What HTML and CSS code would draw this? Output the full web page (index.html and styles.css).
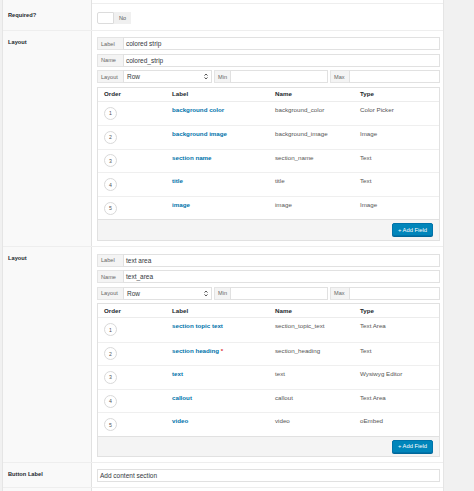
FILE: index.html
```html
<!DOCTYPE html>
<html>
<head>
<meta charset="utf-8">
<link rel="stylesheet" href="styles.css">
</head>
<body>
<div class="panel">
  <div class="row stub"><div class="lab"></div><div class="cnt"></div></div>

  <div class="row">
    <div class="lab">Required?</div>
    <div class="cnt req">
      <div class="toggle"><span class="tg-box"></span><span class="tg-txt">No</span></div>
    </div>
  </div>

  <div class="row">
    <div class="lab">Layout</div>
    <div class="cnt fields">
      <div class="group"><span class="pre pre-w">Label</span><span class="inp">colored strip</span></div>
      <div class="group"><span class="pre pre-w">Name</span><span class="inp">colored_strip</span></div>
      <div class="trio">
        <div class="group"><span class="pre pre-w">Layout</span><span class="inp sel">Row<svg class="arr" width="4" height="7" viewBox="0 0 4 7"><path d="M0.5 2.6 L2 1 L3.5 2.6 M0.5 4.4 L2 6 L3.5 4.4" fill="none" stroke="#444" stroke-width="0.9"/></svg></span></div>
        <div class="group"><span class="pre pre-min">Min</span><span class="inp"></span></div>
        <div class="group"><span class="pre pre-max">Max</span><span class="inp"></span></div>
      </div>
      <div class="tbl">
        <div class="tr th"><span>Order</span><span>Label</span><span>Name</span><span>Type</span></div>
        <div class="tr"><span class="num">1</span><span class="fl">background color</span><span class="fn">background_color</span><span class="fn">Color Picker</span></div>
        <div class="tr"><span class="num">2</span><span class="fl">background image</span><span class="fn">background_image</span><span class="fn">Image</span></div>
        <div class="tr"><span class="num">3</span><span class="fl">section name</span><span class="fn">section_name</span><span class="fn">Text</span></div>
        <div class="tr"><span class="num">4</span><span class="fl">title</span><span class="fn">title</span><span class="fn">Text</span></div>
        <div class="tr"><span class="num">5</span><span class="fl">image</span><span class="fn">image</span><span class="fn">Image</span></div>
        <div class="tfoot"><span class="btn">+ Add Field</span></div>
      </div>
    </div>
  </div>

  <div class="row">
    <div class="lab">Layout</div>
    <div class="cnt fields">
      <div class="group"><span class="pre pre-w">Label</span><span class="inp">text area</span></div>
      <div class="group"><span class="pre pre-w">Name</span><span class="inp">text_area</span></div>
      <div class="trio">
        <div class="group"><span class="pre pre-w">Layout</span><span class="inp sel">Row<svg class="arr" width="4" height="7" viewBox="0 0 4 7"><path d="M0.5 2.6 L2 1 L3.5 2.6 M0.5 4.4 L2 6 L3.5 4.4" fill="none" stroke="#444" stroke-width="0.9"/></svg></span></div>
        <div class="group"><span class="pre pre-min">Min</span><span class="inp"></span></div>
        <div class="group"><span class="pre pre-max">Max</span><span class="inp"></span></div>
      </div>
      <div class="tbl">
        <div class="tr th"><span>Order</span><span>Label</span><span>Name</span><span>Type</span></div>
        <div class="tr"><span class="num">1</span><span class="fl">section topic text</span><span class="fn">section_topic_text</span><span class="fn">Text Area</span></div>
        <div class="tr"><span class="num">2</span><span class="fl">section heading <em class="star">*</em></span><span class="fn">section_heading</span><span class="fn">Text</span></div>
        <div class="tr"><span class="num">3</span><span class="fl">text</span><span class="fn">text</span><span class="fn">Wysiwyg Editor</span></div>
        <div class="tr"><span class="num">4</span><span class="fl">callout</span><span class="fn">callout</span><span class="fn">Text Area</span></div>
        <div class="tr"><span class="num">5</span><span class="fl">video</span><span class="fn">video</span><span class="fn">oEmbed</span></div>
        <div class="tfoot"><span class="btn">+ Add Field</span></div>
      </div>
    </div>
  </div>

  <div class="row last">
    <div class="lab">Button Label</div>
    <div class="cnt single">
      <div class="group"><span class="inp">Add content section</span></div>
    </div>
  </div>
  <div class="row tail"><div class="lab"></div><div class="cnt"></div></div>
</div>
</body>
</html>
```

FILE: styles.css
```css
* { box-sizing: border-box; }
html, body { margin: 0; padding: 0; }
body {
  background: #f1f1f1;
  font-family: "Liberation Sans", Arial, sans-serif;
  color: #23282d;
  height: 491px;
  overflow: hidden;
}
.panel {
  margin-left: 2px;
  width: 442px;
  background: #fff;
  border-left: 1px solid #e5e5e5;
  border-right: 1px solid #e5e5e5;
}
.row {
  display: grid;
  grid-template-columns: 89px 1fr;
  border-top: 1px solid #eeeeee;
}
.row.stub { border-top: 0; height: 3px; }
.row.last { border-bottom: 1px solid #eeeeee; }
.row.tail { border-top: 0; height: 10px; }
.lab {
  background: #f9f9f9;
  border-right: 1px solid #e1e1e1;
  padding: 7px 5px 0;
  font-size: 5.7px;
  line-height: 8px;
  font-weight: bold;
  color: #23282d;
}
.cnt { padding: 6px 3px 5px 5px; }
.cnt.req { padding: 8px 3px 6px 5px; }
.cnt.fields { display: flex; flex-direction: column; gap: 3.5px; padding-bottom: 5px; }
.row:nth-child(4) .cnt.fields { padding-top: 7px; }
.cnt.single { padding: 6px 3px 5px 5px; }

.toggle { display: flex; height: 12px; width: 34px; }
.tg-box { width: 17px; background: #fff; border: 1px solid #dcdcdc; border-radius: 2px 0 0 2px; }
.tg-txt {
  flex: 1; background: #f0f0f0; font-size: 5.5px; color: #555;
  display: flex; align-items: center; padding-left: 5px;
}

.group { display: flex; height: 13px; }
.pre {
  flex: none;
  background: #f4f4f4;
  border: 1px solid #e4e4e4;
  border-right: 0;
  font-size: 5.6px;
  color: #666;
  display: flex; align-items: center;
  padding-left: 3px;
}
.pre-w { width: 26px; }
.pre-min { width: 16px; }
.pre-max { width: 19px; }
.inp {
  flex: 1;
  background: #fff;
  border: 1px solid #e1e1e1;
  font-size: 6.5px;
  color: #32373c;
  display: flex; align-items: center;
  padding-left: 2px;
}
.sel { justify-content: space-between; padding-right: 3px; padding-left: 3px; }
.arr { display: block; }
.trio {
  display: grid;
  grid-template-columns: 115px 114px 1fr;
  column-gap: 2px;
}

.tbl {
  border: 1px solid #e1e1e1;
  height: 154px;
  display: flex; flex-direction: column;
}
.tr {
  display: grid;
  grid-template-columns: 68px 103px 85px 1fr;
  height: 23.6px;
  border-top: 1px solid #efefef;
  font-size: 6.2px;
  line-height: 8px;
}
.tr > span { padding: 4px 0 0 6px; }
.tr.th { height: 14px; border-top: 0; font-weight: bold; color: #23282d; border-bottom: 1px solid #ececec; }
.tr.th > span { padding-top: 2.5px; }
.tr.th + .tr { border-top: 0; }
.fl { color: #0073aa; font-weight: bold; }
.fn { color: #555; }
.star { color: #dc3232; font-style: normal; }
.tr > span.num {
  padding: 0;
  margin-left: 6px;
  align-self: center;
  width: 13px; height: 13px;
  border: 1px solid #d9d9d9;
  border-radius: 50%;
  display: flex; align-items: center; justify-content: center;
  font-size: 5.2px;
  color: #555;
  background: #fff;
}
.tfoot {
  flex: 1;
  background: #f4f4f4;
  border-top: 1px solid #e1e1e1;
  display: flex;
  justify-content: flex-end;
  padding: 3px 6px 0 0;
}
.btn {
  width: 41px; height: 13px;
  background: #0085ba;
  border: 1px solid #0073aa;
  border-radius: 2px;
  box-shadow: 0 1px 0 #006799;
  color: #fff;
  font-size: 5.8px;
  display: flex; align-items: center; justify-content: center;
}
```
